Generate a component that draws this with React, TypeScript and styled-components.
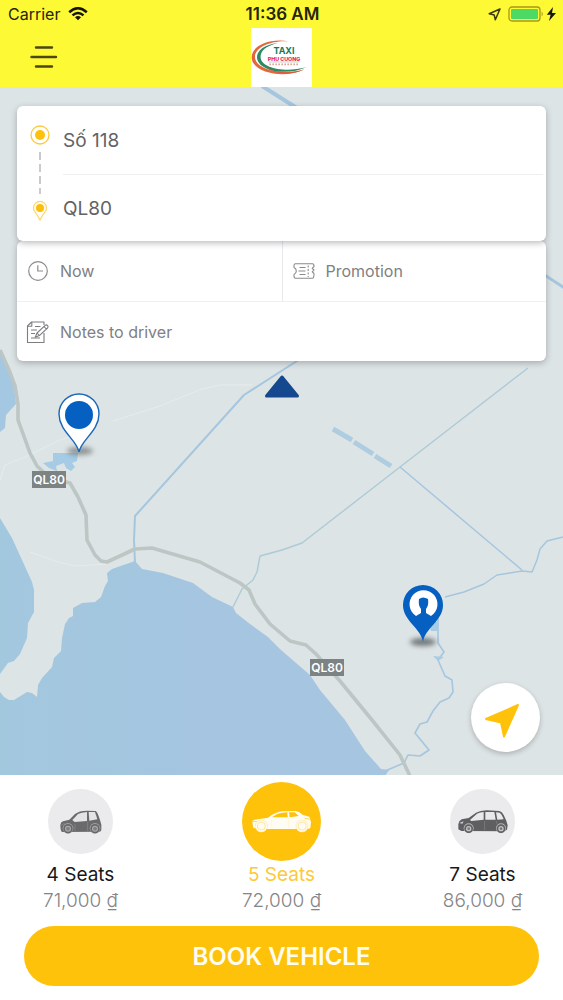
import React, { useState } from "react";
import styled, { createGlobalStyle } from "styled-components";

const GlobalStyle = createGlobalStyle`
  *, *::before, *::after { box-sizing: border-box; }
  body {
    margin: 0;
    font-family: Inter, "Liberation Sans", sans-serif;
    background: #ffffff;
  }
  button, input { font: inherit; color: inherit; }
  button { border: 0; padding: 0; background: none; cursor: pointer; }
`;

const Screen = styled.div`
  display: flex;
  flex-direction: column;
  min-height: 100vh;
`;

const Header = styled.header`
  background: #fdfa35;
  color: #26240a;
`;

const StatusBar = styled.div`
  display: grid;
  grid-template-columns: 1fr auto 1fr;
  align-items: center;
  height: 28px;
  padding: 0 6px 0 8px;
  font-size: 16px;
  line-height: 28px;
`;

const StatusGroup = styled.div<{ $end?: boolean }>`
  display: flex;
  align-items: center;
  justify-content: ${(p) => (p.$end ? "flex-end" : "flex-start")};
  gap: ${(p) => (p.$end ? 7 : 8)}px;
`;

const Clock = styled.time`
  font-size: 17px;
  font-weight: 600;
`;

const NavBar = styled.div`
  display: grid;
  grid-template-columns: 1fr auto 1fr;
  align-items: center;
  height: 59px;
  padding: 0 30px;
`;

const MenuButton = styled.button`
  display: flex;
  width: 28px;
  height: 30px;
  align-items: flex-start;
  justify-content: center;
`;

const Logo = styled.svg`
  display: block;
  width: 61px;
  height: 59px;
  background: #ffffff;
`;

const MapArea = styled.main`
  position: relative;
  flex: 1 0 auto;
  display: flex;
  flex-direction: column;
  min-height: 640px;
  padding: 19px 17px 23px;
  background: #dde4e5;
`;

const MapCanvas = styled.svg`
  position: absolute;
  inset: 0;
  width: 100%;
  height: 100%;
`;

const TripForm = styled.form`
  position: relative;
  display: flex;
  flex-direction: column;
`;

const Card = styled.section<{ $raised?: boolean }>`
  position: relative;
  z-index: ${(p) => (p.$raised ? 1 : 0)};
  background: #ffffff;
  border-radius: 6px;
  box-shadow: 0 2px 6px rgba(60, 60, 70, 0.35);
`;

const RouteCard = styled(Card)`
  display: flex;
  padding: 1px 3px 0 12px;
`;

const RouteMarks = styled.svg`
  flex: none;
  width: 22px;
  height: 134px;
`;

const RouteFields = styled.div`
  flex: 1;
  min-width: 0;
  margin-left: 12px;
`;

const RouteInput = styled.input`
  display: block;
  width: 100%;
  height: 67px;
  padding: 0;
  border: 0;
  outline: 0;
  background: none;
  color: #626265;
  font-size: 19px;

  & + & {
    border-top: 1px solid #efeff1;
  }
`;

const OptionCard = styled(Card)`
  display: grid;
  grid-template-columns: 1fr 1fr;
`;

const OptionButton = styled.button<{ $wide?: boolean; $divided?: boolean }>`
  display: flex;
  align-items: center;
  gap: 10px;
  height: 60px;
  padding-left: 9px;
  grid-column: ${(p) => (p.$wide ? "1 / -1" : "auto")};
  border-top: ${(p) => (p.$wide ? "1px solid #f0eff1" : "0")};
  border-left: ${(p) => (p.$divided ? "1px solid #e9e8eb" : "0")};
  color: #808083;
  font-size: 16px;

  svg { flex: none; }
`;

const CollapseButton = styled.button`
  position: relative;
  align-self: center;
  margin-top: 11px;
  height: 28px;
  width: 42px;
`;

const LocateButton = styled.button`
  position: relative;
  display: flex;
  align-items: center;
  justify-content: center;
  align-self: flex-end;
  width: 69px;
  height: 69px;
  margin: auto 6px 0 0;
  border-radius: 50%;
  background: #ffffff;
  box-shadow: 0 2px 5px rgba(60, 60, 70, 0.3);
`;

const Sheet = styled.footer`
  padding: 6px 0 14px;
  background: #ffffff;
`;

const VehicleList = styled.fieldset`
  display: flex;
  justify-content: space-between;
  margin: 0;
  padding: 0;
  border: 0;
`;

const VehicleOption = styled.label`
  position: relative;
  display: flex;
  flex: 0 1 161px;
  flex-direction: column;
  align-items: center;
  cursor: pointer;
`;

const HiddenRadio = styled.input`
  position: absolute;
  opacity: 0;
`;

const VehicleSlot = styled.span`
  display: flex;
  align-items: center;
  justify-content: center;
  height: 81px;
`;

const VehicleDisc = styled.span<{ $active: boolean }>`
  display: flex;
  align-items: center;
  justify-content: center;
  width: ${(p) => (p.$active ? 79 : 65)}px;
  height: ${(p) => (p.$active ? 79 : 65)}px;
  border-radius: 50%;
  background: ${(p) => (p.$active ? "#ffc20a" : "#ebebed")};
`;

const VehicleName = styled.span<{ $active: boolean }>`
  color: ${(p) => (p.$active ? "#fcc93a" : "#18181a")};
  font-size: 19px;
  line-height: 26px;
`;

const VehiclePrice = styled.span`
  color: #858588;
  font-size: 19px;
  font-weight: 300;
  line-height: 26px;
`;

const BookButton = styled.button`
  display: block;
  width: calc(100% - 48px);
  height: 60px;
  margin: 12px 24px 0;
  border-radius: 30px;
  background: #ffc20a;
  color: #fffdf0;
  font-size: 24px;
  font-weight: 600;
`;

function WifiIcon() {
  return (
    <svg width="20" height="14" viewBox="0 0 20 14" fill="none" stroke="#16150a" strokeWidth="2.5">
      <path d="M1.2 5.2Q10-2.6 18.8 5.2" />
      <path d="M4.5 8.4Q10 3.6 15.5 8.4" />
      <path d="M7 10.2Q10 7.6 13 10.2L10 13.2Z" fill="#16150a" stroke="none" />
    </svg>
  );
}

function StatusIcons() {
  return (
    <>
      <svg width="13" height="13" viewBox="0 0 13 13" fill="none" stroke="#3a3808" strokeWidth="1.5" strokeLinejoin="round">
        <path d="M12 1 1.2 5.8 6.2 6.9 7.3 11.8Z" />
      </svg>
      <svg width="49" height="16" viewBox="0 0 49 16">
        <rect x="1" y="1" width="31" height="14" rx="3" fill="none" stroke="#a6981c" strokeWidth="1.3" />
        <rect x="3" y="3" width="27" height="10" rx="1" fill="#4cd964" />
        <path d="M33.6 5.5Q36 8 33.6 10.5Z" fill="#a6981c" />
        <path d="M45 1 38.8 8.8H42.6L41 15 48 7H44Z" fill="#16150a" />
      </svg>
    </>
  );
}

function BrandLogo() {
  return (
    <Logo viewBox="15 12 183 177" role="img" aria-label="Taxi Phu Cuong">
      <path d="M128 52C66 42 15 68 17 102C19 144 110 168 176 136C112 156 29 138 27 100C25 68 80 48 128 52Z" fill="#e2673d" />
      <path d="M96 57C54 62 32 80 33 101C36 140 120 158 180 130C120 146 48 134 44 102C42 82 58 66 96 57Z" fill="#2b8a62" />
      <path d="M50 121C74 148 134 152 176 136C134 158 72 150 50 121Z" fill="#d9583c" />
      <text x="114" y="91" textAnchor="middle" fontFamily="Inter, sans-serif" fontSize="27" fontWeight="700" fill="#157a5c">TAXI</text>
      <text x="114" y="110" textAnchor="middle" fontFamily="Inter, sans-serif" fontSize="16" fontWeight="800" fill="#e5274f">PHU CUONG</text>
      <path d="M68 114H160" stroke="#8aa79c" strokeWidth="1.5" />
      <path d="M70 121H160" stroke="#e0a798" strokeWidth="5" strokeDasharray="5 4" />
    </Logo>
  );
}

function Shield({ x, y }: { x: number; y: number }) {
  return (
    <g>
      <rect x={x} y={y} width="34" height="17" fill="#7d8283" />
      <text x={x + 17} y={y + 13} textAnchor="middle" fontFamily="Inter, sans-serif" fontSize="12" fontWeight="600" fill="#ffffff">
        QL80
      </text>
    </g>
  );
}

function TripMap() {
  return (
    <MapCanvas viewBox="0 87 563 688" preserveAspectRatio="xMidYMid slice" role="img" aria-label="Map of the trip">
      <defs>
        <filter id="soft" x="-50%" y="-100%" width="200%" height="300%">
          <feGaussianBlur stdDeviation="2.4" />
        </filter>
        <linearGradient id="sea" x1="0" x2="1">
          <stop offset="0" stopColor="#a2c8de" />
          <stop offset="0.5" stopColor="#a5c5e0" />
        </linearGradient>
      </defs>
      <rect x="-400" y="-400" width="1400" height="1600" fill="#dde4e5" />
      <path
        d="M0 518 12 538 22 560 32 582 34 590V612L28 623 27 638 20 654 14 661 8 663 0 674V692L4 697 9 700H14L27 692 32 693 37 697 38 685 42 678 52 667 54 658 61 651 62 638 65 624 69 618 73 616V608L82 603 95 602 101 597 105 586 108 581 107 573 112 569 135 561 142 569 163 573 193 583 212 597 233 607 236 613 250 624 268 637 281 650 310 675 320 690 345 720 365 751 381 769 389 770 385 776H0Z"
        fill="url(#sea)"
      />
      <path d="M0 350 6 360 13 378 16 404 6 415 5 428 0 432Z" fill="#a5c8e2" />
      <path d="M53 453H78L77 461 72 463 75 467 71 471 66 468 64 463 56 466 57 471 49 468 43 463 53 461Z" fill="#a6cbe5" />
      <g fill="none" stroke="#e8ecea" strokeWidth="1">
        <path d="M113 421 160 406 202 389 220 385H252" />
        <path d="M0 480 5 465 25 457 60 440 72 436" />
        <path d="M30 552 55 561 75 566 107 564" />
      </g>
      <g fill="none" stroke="#a5c6df" strokeLinejoin="round">
        <path d="M262 86 300 110" strokeWidth="4" />
        <path d="M540 272 566 289" strokeWidth="3" />
        <path d="M135 563 134 540 135 516 244 395 300 359" strokeWidth="2" />
        <path d="M528 368 400 467 302 543 282 550 260 556 257 572 253 580 242 589 233 607" strokeWidth="1.4" stroke="#adcad8" />
        <path d="M400 467 522 570 M445 597 464 592 484 584 497 575 522 571 532 572 537 560 540 549 547 541 563 537" strokeWidth="1.5" />
        <path d="M438 617V643L444 652 438 660 445 676 452 680 453 692 449 698 440 702 433 711 427 722 420 724 415 733 429 750 420 756 408 755 404 763 385 771" strokeWidth="1.6" />
        <path d="M333 429 352 440M354 442 373 454M375 456 391 466" strokeWidth="5" stroke="#afcde0" />
      </g>
      <path d="M428 622H438V631H431ZM433 656 444 657 438 661Z" fill="#a9cbe4" />
      <path
        d="M0 350 9 370 15 386 18 404 18 420 30 453 37 466 50 478 70 483 78 497 86 515 87 540 95 555 101 561 107 562 135 549 152 548 200 562 240 583 249 590 255 604 270 624 290 641 306 645 316 654 340 681 372 720 400 755 410 776"
        fill="none"
        stroke="#bcc6c4"
        strokeWidth="3.6"
        strokeLinejoin="round"
      />
      <Shield x={32} y={471} />
      <Shield x={310} y={659} />

      <ellipse cx="80" cy="451" rx="13" ry="4" fill="#62696b" opacity="0.65" filter="url(#soft)" />
      <path d="M79 452C77 440 59 431 59 414A20 20 0 0 1 99 414C99 431 81 440 79 452Z" fill="#ffffff" stroke="#1a66b8" strokeWidth="1.4" />
      <circle cx="79" cy="415" r="14" fill="#0560c2" />

      <ellipse cx="423" cy="642" rx="13" ry="4" fill="#4e5456" opacity="0.75" filter="url(#soft)" />
      <path d="M423 642C421 628 403 621 403 605A20 20 0 0 1 443 605C443 621 425 628 423 642Z" fill="#0560c2" />
      <path d="M416 616A14 14 0 1 1 431 616L426 613V609Q429 605 428 599Q423 596 419 599Q418 605 421 609V613Z" fill="#ffffff" />
    </MapCanvas>
  );
}

function ClockIcon() {
  return (
    <svg width="24" height="24" viewBox="0 0 24 24" fill="none" stroke="#8b8b8d" strokeWidth="1.2">
      <circle cx="12" cy="12" r="9.3" />
      <path d="M11.8 6.3V12H17" />
    </svg>
  );
}

function TicketIcon() {
  return (
    <svg width="24" height="24" viewBox="0 0 24 24" fill="none" stroke="#8b8b8d" strokeWidth="1.1" strokeLinejoin="round">
      <path d="M3.5 4.8H20.5Q22 4.8 22 7.5L20.2 9.3 22 11 20.2 12.8 22 14.5Q22 19.2 20.5 19.2H3.5Q2 19.2 2 17V15.5Q4.3 14.5 4.3 12T2 8.5V6.5Q2 4.8 3.5 4.8Z" />
      <path d="M7.5 8.5H13.5M6.5 12H13.5M7.5 15.5H13.5" />
      <path d="M16.2 6.5V18" strokeDasharray="2 1.5" />
    </svg>
  );
}

function NotesIcon() {
  return (
    <svg width="24" height="24" viewBox="0 0 24 24" fill="none" stroke="#7d7d80" strokeWidth="1.1" strokeLinejoin="round">
      <path d="M18 5V2H5.5L1.5 6V22.5H18V13" />
      <path d="M5.8 2V6.2H1.5M9 6.5H14.5M5 10H11M5 13.5H9M5 18H14" />
      <path d="M11 13 19.2 5.4Q20.5 4.4 21.6 5.6T21.5 8L13.4 15.6 9.2 17.2ZM11 13 13.4 15.6M18 6.5 20.4 9.1" />
    </svg>
  );
}

function SmallCar() {
  return (
    <svg width="42" height="24" viewBox="179 118 126 72">
      <path d="M180 162Q181 155 188 152L207 147 224 130Q236 120 260 120L286 121Q290 122 294 134L299 148 303 162V177Q303 182 298 183L186 184Q180 182 180 162Z" fill="#6a6a6d" />
      <path d="M216 148 233 130Q243 125 260 124L260 151 223 154Z" fill="#e4e4e6" />
      <path d="M265 124H284L291 146 267 150Z" fill="#e4e4e6" />
      <path d="M262 153V182M224 160V182M182 164 193 158" stroke="#8c8c8f" strokeWidth="2" />
      {[203, 284].map((x) => (
        <g key={x}>
          <circle cx={x} cy="173" r="16" fill="#a2a2a5" />
          <circle cx={x} cy="174" r="14" fill="#68686b" />
          <circle cx={x} cy="174" r="9" fill="#aeaeb1" />
          <circle cx={x} cy="174" r="6" fill="#808083" />
        </g>
      ))}
    </svg>
  );
}

function SedanCar() {
  return (
    <svg width="59" height="23" viewBox="32 84 177 69">
      <path d="M33 121Q33 114 40 113L80 107Q103 90 122 88L163 87Q174 89 185 99L204 104 209 120 207 138 200 141H50L36 137Z" fill="#fffdf3" />
      <path d="M92 106Q108 93 124 92L138 91 139 106ZM143 91H160L172 102 145 106Z" fill="#ffc20a" />
      <path d="M34 118 48 119M190 109 205 112" stroke="#ffd75c" strokeWidth="3" />
      <path d="M90 111 92 138M142 108V138" stroke="#fff0c4" strokeWidth="1.5" />
      {[60, 182].map((x) => (
        <g key={x} fill="#fffdf3">
          <circle cx={x} cy="132" r="19" fill="#ffe9a8" />
          <circle cx={x} cy="132" r="17" />
          <circle cx={x} cy="132" r="12" fill="none" stroke="#ffe08a" strokeWidth="2.5" />
        </g>
      ))}
    </svg>
  );
}

function VanCar() {
  return (
    <svg width="50" height="24" viewBox="530 119 150 72">
      <path d="M531 162 534 153 541 147 562 143 584 127Q596 121 616 120L654 122Q662 124 667 134L675 151 679 165 677 178 668 183 540 182 531 177Z" fill="#5f5f62" />
      <path d="M566 149 587 130Q596 126 607 125V148L570 152ZM612 125H639L643 148H612ZM644 126 655 127Q661 131 667 147L648 148Z" fill="#e9e9eb" />
      <path d="M610 152V180M645 152 647 160" stroke="#858588" strokeWidth="2" />
      <path d="M534 158 547 153 543 160Z" fill="#d8d8da" />
      {[562, 659].map((x) => (
        <g key={x}>
          <circle cx={x} cy="174" r="15" fill="#b8b8bb" />
          <circle cx={x} cy="175" r="13" fill="#5f5f62" />
          <circle cx={x} cy="175" r="8" fill="#c4c4c7" />
          <circle cx={x} cy="175" r="4" fill="#77777a" />
        </g>
      ))}
    </svg>
  );
}

const vehicles = [
  { id: "four", name: "4 Seats", price: "71,000 ₫", Icon: SmallCar },
  { id: "five", name: "5 Seats", price: "72,000 ₫", Icon: SedanCar },
  { id: "seven", name: "7 Seats", price: "86,000 ₫", Icon: VanCar },
];

export default function App() {
  const [selected, setSelected] = useState("five");

  return (
    <Screen>
      <GlobalStyle />
      <Header>
        <StatusBar>
          <StatusGroup>
            <span>Carrier</span>
            <WifiIcon />
          </StatusGroup>
          <Clock>11:36 AM</Clock>
          <StatusGroup $end>
            <StatusIcons />
          </StatusGroup>
        </StatusBar>
        <NavBar>
          <MenuButton aria-label="Menu">
            <svg width="28" height="28" viewBox="0 0 28 28" stroke="#4b4714" strokeWidth="2.4" strokeLinecap="round">
              <path d="M6 4.5H22M1.5 14H26M6 23.5H22" />
            </svg>
          </MenuButton>
          <BrandLogo />
        </NavBar>
      </Header>

      <MapArea>
        <TripMap />
        <TripForm onSubmit={(e) => e.preventDefault()}>
          <RouteCard $raised>
            <RouteMarks viewBox="0 0 22 134" aria-hidden="true">
              <circle cx="11" cy="28" r="9" fill="none" stroke="#fcca3c" strokeWidth="1.3" />
              <circle cx="11" cy="28" r="5" fill="#ffc20a" />
              <path d="M11 45V87" stroke="#b9b9bb" strokeWidth="1.5" strokeDasharray="8 4" />
              <path d="M11 113Q9 109 6 105A6.5 6.5 0 1 1 16 105Q13 109 11 113Z" fill="#fffdf4" stroke="#fbd768" strokeWidth="1.2" />
              <circle cx="11" cy="101" r="4" fill="#fcbd0c" />
            </RouteMarks>
            <RouteFields>
              <RouteInput aria-label="Pick-up" defaultValue="Số 118" />
              <RouteInput aria-label="Destination" defaultValue="QL80" />
            </RouteFields>
          </RouteCard>
          <OptionCard>
            <OptionButton type="button">
              <ClockIcon />
              Now
            </OptionButton>
            <OptionButton type="button" $divided>
              <TicketIcon />
              Promotion
            </OptionButton>
            <OptionButton type="button" $wide>
              <NotesIcon />
              Notes to driver
            </OptionButton>
          </OptionCard>
        </TripForm>
        <CollapseButton aria-label="Collapse trip details">
          <svg width="42" height="28" viewBox="0 0 42 28">
            <path d="M21 5 36.5 24H5.5Z" fill="#14488f" stroke="#14488f" strokeWidth="3" strokeLinejoin="round" />
          </svg>
        </CollapseButton>
        <LocateButton aria-label="My location">
          <svg width="44" height="44" viewBox="0 0 44 44">
            <path d="M34 9 20 40.5 17 26.5 2 23Z" fill="#ffc20a" stroke="#ffc20a" strokeWidth="2" strokeLinejoin="round" />
          </svg>
        </LocateButton>
      </MapArea>

      <Sheet>
        <VehicleList aria-label="Vehicle type">
          {vehicles.map(({ id, name, price, Icon }) => {
            const active = id === selected;
            return (
              <VehicleOption key={id}>
                <HiddenRadio type="radio" name="vehicle" value={id} checked={active} onChange={() => setSelected(id)} />
                <VehicleSlot>
                  <VehicleDisc $active={active}>
                    <Icon />
                  </VehicleDisc>
                </VehicleSlot>
                <VehicleName $active={active}>{name}</VehicleName>
                <VehiclePrice>{price}</VehiclePrice>
              </VehicleOption>
            );
          })}
        </VehicleList>
        <BookButton type="button">BOOK VEHICLE</BookButton>
      </Sheet>
    </Screen>
  );
}
